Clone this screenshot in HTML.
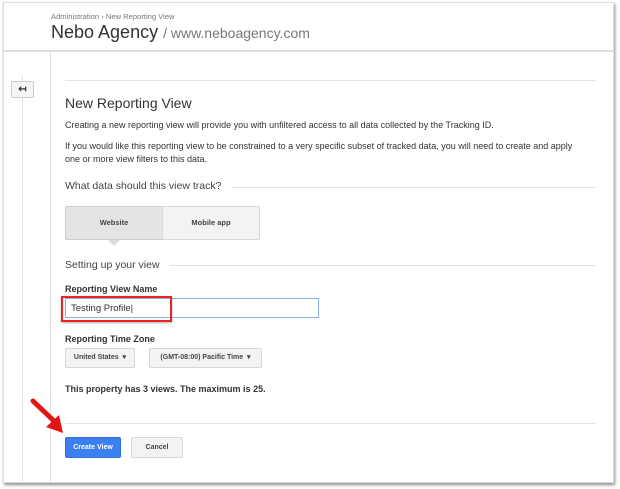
<!DOCTYPE html>
<html><head><meta charset="utf-8"><style>
*{margin:0;padding:0;box-sizing:border-box}
body{width:620px;height:489px;background:#fff;font-family:"Liberation Sans",Arial,sans-serif;color:#333;position:relative;overflow:hidden}
.card{position:absolute;left:3px;top:2px;width:611px;height:481px;background:#fff;border:1px solid #ddd;box-shadow:1px 2px 3px rgba(0,0,0,.45)}
.a{position:absolute;white-space:nowrap}
.hr{position:absolute;height:1px;background:#e2e2e2}
.btn{position:absolute;border:1px solid #d8d8d8;border-radius:2px;background:#f3f3f3;font-size:7.5px;font-weight:bold;color:#444;text-align:center}
</style></head><body>
<div class="card"></div>
<div class="a" style="left:51px;top:12px;font-size:7.6px;color:#777">Administration › New Reporting View</div>
<div class="a" style="left:51px;top:22px;font-size:18px;color:#333">Nebo Agency <span style="font-size:14px;color:#777">/ www.neboagency.com</span></div>
<div class="hr" style="left:4px;top:50px;width:609px;background:#ddd;height:2px"></div>
<div style="position:absolute;left:50px;top:52px;width:1px;height:430px;background:#e0e0e0"></div>
<div style="position:absolute;left:22px;top:76px;width:1px;height:406px;background:#e0e0e0"></div>
<div style="position:absolute;left:11px;top:81px;width:23px;height:17px;border:1px solid #ccc;border-radius:2px;background:#f5f5f5;font-size:10px;font-weight:bold;text-align:center;line-height:15px">↤</div>
<div class="hr" style="left:65px;top:80px;width:531px"></div>
<div class="a" style="left:65px;top:95px;font-size:14px;color:#333">New Reporting View</div>
<div class="a" style="left:65px;top:120px;font-size:9px">Creating a new reporting view will provide you with unfiltered access to all data collected by the Tracking ID.</div>
<div class="a" style="left:65px;top:140px;font-size:9px;line-height:13px">If you would like this reporting view to be constrained to a very specific subset of tracked data, you will need to create and apply<br>one or more view filters to this data.</div>
<div class="a" style="left:65px;top:180px;font-size:10.5px;color:#444">What data should this view track?</div>
<div class="hr" style="left:232px;top:187px;width:364px"></div>
<div class="btn" style="left:65px;top:206px;width:98px;height:34px;line-height:32px;background:#e4e4e4;border-color:#ccc">Website</div>
<div class="btn" style="left:162px;top:206px;width:98px;height:34px;line-height:32px">Mobile app</div>
<div style="position:absolute;left:108px;top:240px;width:0;height:0;border-left:6px solid transparent;border-right:6px solid transparent;border-top:6px solid #ddd"></div>
<div class="a" style="left:65px;top:259px;font-size:10.5px;color:#444">Setting up your view</div>
<div class="hr" style="left:170px;top:265px;width:426px"></div>
<div class="a" style="left:65px;top:284px;font-size:9px;font-weight:bold">Reporting View Name</div>
<div style="position:absolute;left:65px;top:298px;width:254px;height:20px;border:1px solid #8ab0e8"></div>
<div style="position:absolute;left:61px;top:296px;width:111px;height:26px;border:2px solid #e22;box-shadow:0 1px 2px rgba(0,0,0,.3)"></div>
<div class="a" style="left:71px;top:303px;font-size:9.5px;color:#333">Testing Profile|</div>
<div class="a" style="left:65px;top:334px;font-size:9px;font-weight:bold">Reporting Time Zone</div>
<div class="btn" style="left:65px;top:348px;width:70px;height:20px;line-height:18px;font-size:7px">United States &nbsp;▾</div>
<div class="btn" style="left:149px;top:348px;width:113px;height:20px;line-height:18px;font-size:7px">(GMT-08:00) Pacific Time &nbsp;▾</div>
<div class="a" style="left:65px;top:384px;font-size:9px;font-weight:bold">This property has 3 views. The maximum is 25.</div>
<div class="hr" style="left:65px;top:423px;width:531px"></div>
<div class="btn" style="left:65px;top:437px;width:56px;height:21px;line-height:19px;background:#3b7ff0;border-color:#2f6fd8;color:#fff;font-size:7px">Create View</div>
<div class="btn" style="left:131px;top:437px;width:52px;height:21px;line-height:19px;font-size:7px">Cancel</div>
<svg style="position:absolute;left:28px;top:397px" width="40" height="40"><line x1="5" y1="4" x2="26" y2="24" stroke="#e01515" stroke-width="5" stroke-linecap="round"/><polygon points="18,30 35,36 31,18" fill="#e01515"/></svg>
</body></html>
